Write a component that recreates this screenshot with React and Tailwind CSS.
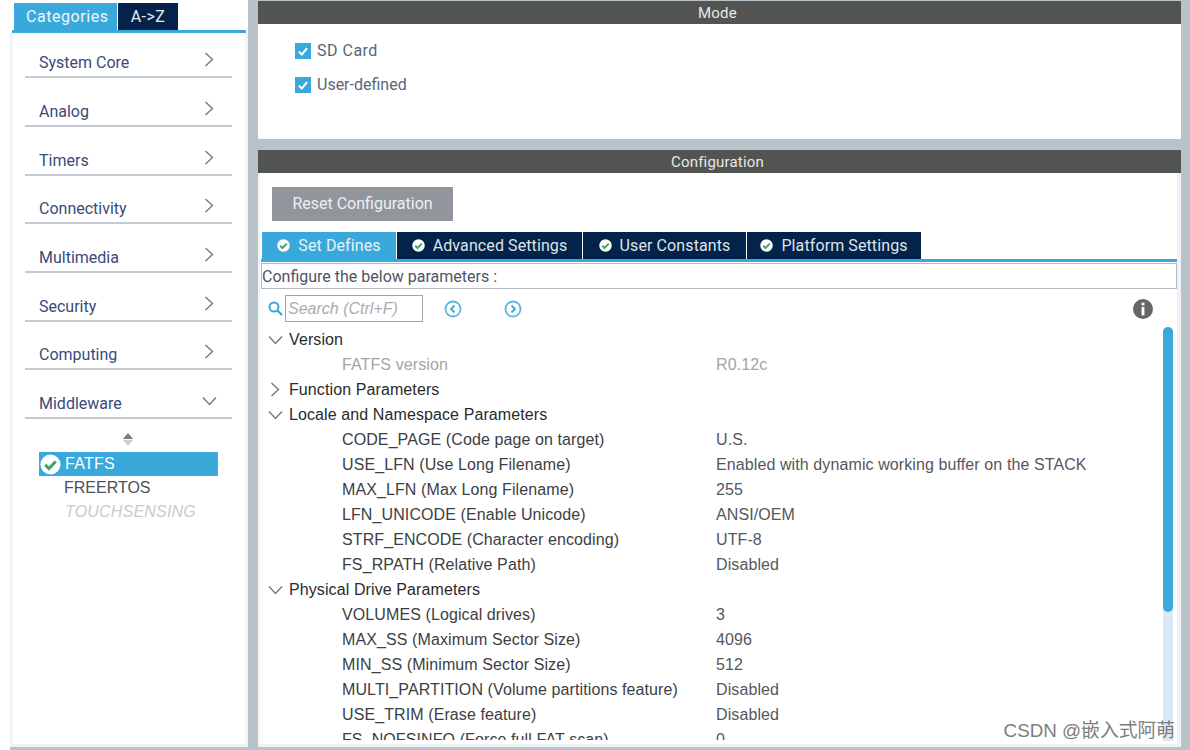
import React from "react";

const categories = ["System Core", "Analog", "Timers", "Connectivity", "Multimedia", "Security", "Computing"];

const tabs = [
  { label: "Set Defines", active: true, width: "w-[134px]" },
  { label: "Advanced Settings", width: "w-[185px]" },
  { label: "User Constants", width: "w-[163px]" },
  { label: "Platform Settings", width: "w-[174px]" },
];

const rows = [
  { type: "group", open: true, label: "Version" },
  { label: "FATFS version", value: "R0.12c", muted: true },
  { type: "group", label: "Function Parameters" },
  { type: "group", open: true, label: "Locale and Namespace Parameters" },
  { label: "CODE_PAGE (Code page on target)", value: "U.S." },
  { label: "USE_LFN (Use Long Filename)", value: "Enabled with dynamic working buffer on the STACK" },
  { label: "MAX_LFN (Max Long Filename)", value: "255" },
  { label: "LFN_UNICODE (Enable Unicode)", value: "ANSI/OEM" },
  { label: "STRF_ENCODE (Character encoding)", value: "UTF-8" },
  { label: "FS_RPATH (Relative Path)", value: "Disabled" },
  { type: "group", open: true, label: "Physical Drive Parameters" },
  { label: "VOLUMES (Logical drives)", value: "3" },
  { label: "MAX_SS (Maximum Sector Size)", value: "4096" },
  { label: "MIN_SS (Minimum Sector Size)", value: "512" },
  { label: "MULTI_PARTITION (Volume partitions feature)", value: "Disabled" },
  { label: "USE_TRIM (Erase feature)", value: "Disabled" },
  { label: "FS_NOFSINFO (Force full FAT scan)", value: "0" },
];

const CheckDot = ({ size = 13, tick = "#3fa866" }) => (
  <svg width={size} height={size} viewBox="0 0 24 24" className="shrink-0">
    <circle cx="12" cy="12" r="11.5" fill="#ffffff" />
    <path d="M6 12.5l4.2 4.2L18 8.6" fill="none" stroke={tick} strokeWidth="3.6" />
  </svg>
);

const Checkbox = () => (
  <span className="w-[16px] h-[16px] bg-[#39a9dc] flex items-center justify-center">
    <svg width="14" height="14" viewBox="0 0 24 24">
      <path d="M5 13l5 5L19 7" fill="none" stroke="#ffffff" strokeWidth="3.4" />
    </svg>
  </span>
);

const ArrowRight = ({ className }) => (
  <svg width="10" height="15" viewBox="0 0 10 15" className={className}>
    <path d="M1.5 1L8.5 7.5L1.5 14" fill="none" stroke="#77797c" strokeWidth="1.4" />
  </svg>
);

const ArrowDown = ({ className }) => (
  <svg width="15" height="10" viewBox="0 0 15 10" className={className}>
    <path d="M1 1.5L7.5 8.5L14 1.5" fill="none" stroke="#77797c" strokeWidth="1.4" />
  </svg>
);

const PanelTitle = ({ children }) => (
  <div className="h-[23px] bg-[#525452] text-[#e8e8e8] text-[15px] leading-[24px] text-center tracking-[0.2px] pr-[4px] shrink-0">
    {children}
  </div>
);

const NavCircle = ({ dir }) => (
  <svg width="18" height="18" viewBox="0 0 18 18">
    <circle cx="9" cy="9" r="7.5" fill="none" stroke="#5cb5e0" strokeWidth="1.8" />
    <path d={dir === "left" ? "M10.5 5.5L7 9L10.5 12.5" : "M7.5 5.5L11 9L7.5 12.5"} fill="none" stroke="#39a9dc" strokeWidth="1.8" />
  </svg>
);

export default function App() {
  return (
    <div className="w-[1190px] h-[750px] overflow-hidden flex bg-[#b7c2c9] font-['Roboto',sans-serif]">
      {/* categories */}
      <aside className="w-[248px] h-full bg-white shrink-0 pl-[10px]">
        <div className="h-full flex flex-col border-b-[3px] border-[#b7c2c9]">
          <div className="pl-[4px] pt-[3px] flex gap-px h-[30px] shrink-0">
            <div className="w-[103px] bg-[#39a9dc] text-[#f0f6fa] text-[16px] leading-[28px] pl-[12px] tracking-[0.55px]">Categories</div>
            <div className="w-[60px] bg-[#03234b] text-[#e6eaee] text-[16px] leading-[28px] text-center tracking-[0.4px]">A-&gt;Z</div>
          </div>
          <div className="h-[3px] bg-[#39a9dc] ml-[2px] mr-[2px] shrink-0" />
          <div className="flex-1 border-l-[3px] border-r-[3px] border-b-[3px] border-[#f0f2f5] pl-[12px] pr-[13px]">
            <div className="-mt-[3.5px]">
              {categories.map((name) => (
                <div key={name} className="h-[48.7px] border-b-2 border-[#c3cbd2] flex items-end justify-between pb-[3px] pl-[14px] pr-[18px]">
                  <span className="text-[16px] leading-[20px] text-[#3a4a7a]">{name}</span>
                  <ArrowRight className="mb-[6px]" />
                </div>
              ))}
              <div className="h-[48.7px] border-b-2 border-[#c3cbd2] flex items-end justify-between pb-[3px] pl-[14px] pr-[15px]">
                <span className="text-[16px] leading-[20px] text-[#3a4a7a]">Middleware</span>
                <ArrowDown className="mb-[8px]" />
              </div>
            </div>
            <div className="flex flex-col items-center w-full pt-[14px] pr-[2px]">
              <span className="w-0 h-0 border-x-[5px] border-x-transparent border-b-[6px] border-b-[#77797c]" />
              <span className="w-0 h-0 mt-px border-x-[5px] border-x-transparent border-t-[6px] border-t-[#c9cdd0]" />
            </div>
            <div className="ml-[14px] mt-[6px] w-[179px] font-['Liberation_Sans',sans-serif]">
              <div className="h-[24px] bg-[#39a9dc] flex items-center pl-[1px] gap-[4px] text-white text-[16px] tracking-[0.3px]">
                <CheckDot size={21} />
                FATFS
              </div>
              <div className="h-[24px] leading-[24px] pl-[25px] text-[16px] text-[#4c4f5a]">FREERTOS</div>
              <div className="h-[24px] leading-[24px] pl-[26px] text-[16px] italic text-[#c4ccd4] tracking-[0.2px]">TOUCHSENSING</div>
            </div>
          </div>
        </div>
      </aside>

      {/* right column */}
      <main className="flex-1 pl-[10px] pr-[9px] pt-px flex flex-col">
        <section className="h-[138px] bg-white flex flex-col shrink-0">
          <PanelTitle>Mode</PanelTitle>
          <div className="pl-[37px] pt-[19px] flex flex-col gap-[18px] text-[16px] leading-[16px] text-[#5c6478]">
            <label className="flex items-center gap-[6px]"><Checkbox /><span className="tracking-[0.5px]">SD Card</span></label>
            <label className="flex items-center gap-[6px]"><Checkbox />User-defined</label>
          </div>
        </section>

        <section className="mt-[11px] flex-1 flex flex-col min-h-0 mb-[3px]">
          <PanelTitle>Configuration</PanelTitle>
          <div className="flex-1 bg-white min-h-0 overflow-hidden relative shadow-[inset_2px_0_#f0f2f5,inset_-4px_0_#f0f2f5,inset_0_-3px_#f0f2f5]">
            <div className="ml-[14px] mt-[14px] w-[181px] h-[34px] bg-[#90969c] text-[#eef0f2] text-[16px] leading-[33px] text-center">
              Reset Configuration
            </div>

            <div className="ml-[4px] mt-[11px] flex gap-px h-[27px]">
              {tabs.map((t) => (
                <div
                  key={t.label}
                  className={`${t.width} ${t.active ? "bg-[#39a9dc] text-[#e6f3fa]" : "bg-[#03234b] text-[#dfe4ea]"} flex items-center justify-center gap-[8px] text-[16px] tracking-[0.1px]`}
                >
                  <CheckDot size={13} />
                  {t.label}
                </div>
              ))}
            </div>
            <div className="h-[3px] ml-[3px] mr-[4px] bg-[#39a9dc]" />

            <div className="h-[26px] ml-[3px] mr-[4px] mt-px border-x border-y border-[#b4bac0] text-[16px] leading-[25px] text-[#4e5468]">
              Configure the below parameters :
            </div>

            <div className="h-[31px] mt-[4px] flex items-center ml-[10px]">
              <svg width="15" height="15" viewBox="0 0 15 15">
                <circle cx="6" cy="6" r="4.5" fill="none" stroke="#39a9dc" strokeWidth="2" />
                <path d="M9.5 9.5L14 14" stroke="#39a9dc" strokeWidth="2.2" />
              </svg>
              <div className="ml-[2px] w-[138px] h-[27px] border border-[#a0a4a8] text-[16px] italic text-[#a9adb2] leading-[26px] pl-[2px] font-['Liberation_Sans',sans-serif]">Search (Ctrl+F)</div>
              <span className="ml-[21px]"><NavCircle dir="left" /></span>
              <span className="ml-[42px]"><NavCircle dir="right" /></span>
              <svg width="20" height="20" viewBox="0 0 20 20" className="ml-auto mr-[28px]">
                <circle cx="10" cy="10" r="10" fill="#666666" />
                <rect x="8.6" y="3.6" width="2.8" height="2.8" fill="#ffffff" />
                <rect x="8.6" y="8" width="2.8" height="8.4" fill="#ffffff" />
              </svg>
            </div>

            <div className="h-[413px] mt-[3px] overflow-hidden tracking-[0.1px] font-['Liberation_Sans',sans-serif]">
              {rows.map((r) => r.type === "group" ? (
                <div key={r.label} className="h-[25px] flex items-center pl-[10px] text-[16px] text-[#2a2a2e]">
                  <span className="w-[21px] flex items-center">
                    {r.open ? <ArrowDown /> : <ArrowRight className="ml-[2px]" />}
                  </span>
                  {r.label}
                </div>
              ) : (
                <div key={r.label} className={`h-[25px] flex items-center pl-[84px] text-[16px] ${r.muted ? "text-[#a2a4a8]" : "text-[#3c3e44]"}`}>
                  <span className="w-[374px] shrink-0">{r.label}</span>
                  <span className={r.muted ? "text-[#a2a4a8]" : "text-[#55575c]"}>{r.value}</span>
                </div>
              ))}
            </div>

            {/* scrollbar */}
            <div className="absolute left-[905px] top-[154px] bottom-[6px] w-[10px] bg-[#d8e8f5] rounded-t-full">
              <div className="h-[285px] bg-[#39a9dc] rounded-full" />
            </div>
            <div className="absolute right-[6px] bottom-[5px] text-[18.8px] leading-[22px] text-[#7d7d7d] font-['Liberation_Sans','Noto_Sans_CJK_SC',sans-serif]">
              CSDN @嵌入式阿萌
            </div>
          </div>
        </section>
      </main>
    </div>
  );
}
